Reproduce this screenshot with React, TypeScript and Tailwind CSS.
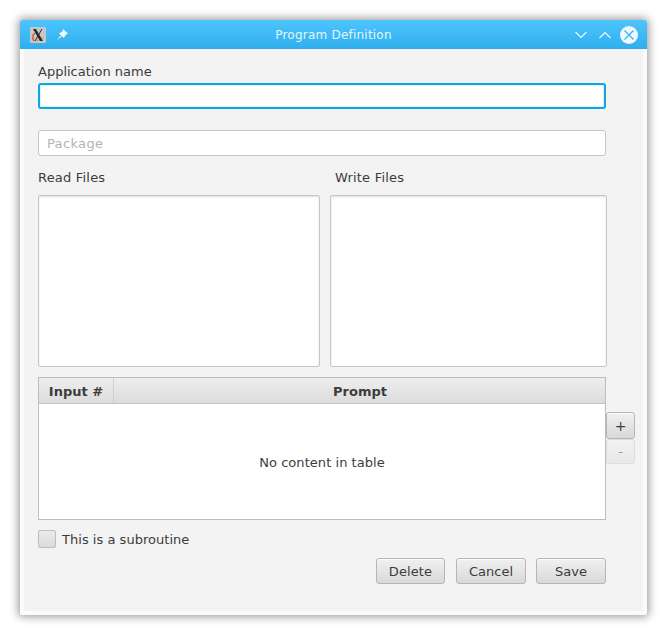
export default function App() {
  const font = { fontFamily: '"DejaVu Sans", sans-serif' };
  const btn =
    "flex items-center justify-center rounded-[3px] border border-[#b5b5b5] bg-gradient-to-b from-[#f0f0f0] to-[#d9d9d9] pt-[1px] text-[13px] text-[#3c3c3c] shadow-[inset_0_1px_0_#fafafa]";
  return (
    <div className="h-[635px] w-[667px] overflow-hidden bg-white pl-[20px] pt-[20px]" style={font}>
      <div className="flex h-[595px] w-[627px] flex-col overflow-hidden rounded-t-[3px] rounded-b-[2px] bg-[#fbfbfb] shadow-[0_0_9px_2px_rgba(0,0,0,0.38)]">
        <div className="flex h-[29px] shrink-0 items-center bg-gradient-to-b from-[#4dc5fe] to-[#2eaeec] pl-[10px] pr-[9px]">
          <svg width="16" height="16" viewBox="0 0 16 16" className="shrink-0">
            <rect width="16" height="16" rx="1" fill="#c4c8cb" />
            <path d="M4 14 Q1 9 5 6" stroke="#d9602a" strokeWidth="1.5" fill="none" />
            <path d="M5 13 Q10 15 14 10" stroke="#dca24a" strokeWidth="1.2" fill="none" />
            <path d="M3 2 L6 2 L13 14 L10 14 Z" fill="#2b2b2b" />
            <path d="M12 2 L5 14" stroke="#2b2b2b" strokeWidth="1" />
          </svg>
          <svg width="14" height="14" viewBox="0 0 14 14" className="ml-[9px] shrink-0">
            <path d="M8 1 L13 5.4 L11 6.4 L8.8 10 L4 5.6 L7.4 3.4 Z" fill="#f4fbff" />
            <path d="M5.8 7.6 L1.5 12.5 L6.6 8.4 Z" fill="#f4fbff" />
          </svg>
          <div className="flex-1 pl-[24px] text-center text-[12px] tracking-[0.22px] text-[#e4f5fe]">Program Definition</div>
          <svg width="14" height="10" viewBox="0 0 14 10" className="shrink-0">
            <path d="M1.5 2 L7 7.5 L12.5 2" stroke="#f2fbff" strokeWidth="1.1" fill="none" />
          </svg>
          <svg width="14" height="10" viewBox="0 0 14 10" className="ml-[10px] shrink-0">
            <path d="M1.5 8 L7 2.5 L12.5 8" stroke="#f2fbff" strokeWidth="1.1" fill="none" />
          </svg>
          <svg width="18" height="18" viewBox="0 0 18 18" className="ml-[8px] shrink-0">
            <circle cx="9" cy="9" r="9" fill="#eef8fd" />
            <path d="M4.5 4.5 L13.5 13.5 M13.5 4.5 L4.5 13.5" stroke="#36b2ee" strokeWidth="1.2" />
          </svg>
        </div>
        <div className="mx-[4px] mb-[4px] flex flex-1 flex-col bg-[#f3f3f3] pl-[14px] text-[13px] text-[#3c3c3c]">
          <div className="mt-[15px] h-[16px] leading-[16px]">Application name</div>
          <div className="mt-[3px] h-[26px] w-[568px] rounded-[3px] border-2 border-[#0fa6de] bg-white shadow-[inset_0_0_0_1px_#dff1f9]" />
          <div className="mt-[21px] flex h-[26px] w-[568px] items-center rounded-[3px] border border-[#c4c4c4] bg-white pl-[8px] pt-[1px] text-[13px] tracking-[0.35px] text-[#b4b4b4]">
            Package
          </div>
          <div className="mt-[14px] flex h-[16px] leading-[16px]">
            <div className="w-[297px] tracking-[0.2px]">Read Files</div>
            <div className="tracking-[0.2px]">Write Files</div>
          </div>
          <div className="mt-[9px] flex h-[172px] w-[569px] gap-[10px]">
            <div className="w-[282px] rounded-[2px] border border-[#c6c6c6] bg-white shadow-[inset_0_1px_2px_#ddd]" />
            <div className="w-[277px] rounded-[2px] border border-[#c6c6c6] bg-white shadow-[inset_0_1px_2px_#ddd]" />
          </div>
          <div className="mt-[10px] flex">
            <div className="flex h-[143px] w-[568px] shrink-0 flex-col border border-[#bdbdbd] bg-white">
              <div className="flex h-[26px] shrink-0 border-b border-[#c4c4c4] bg-gradient-to-b from-[#eeeeee] to-[#dcdcdc] text-[13px] font-bold text-[#3c3c3c]">
                <div className="flex w-[75px] items-center justify-center border-r border-[#cfcfcf] pt-[2px]">Input #</div>
                <div className="flex flex-1 items-center justify-center pl-[1px] pt-[2px]">Prompt</div>
              </div>
              <div className="flex flex-1 items-center justify-center pt-[3px] tracking-[0.05px]">No content in table</div>
            </div>
            <div className="mt-[35px] flex flex-col">
              <div className={"h-[27px] w-[29px] text-[14px] " + btn}>+</div>
              <div className="flex h-[25px] w-[29px] items-center justify-center rounded-[3px] border border-[#dcdcdc] bg-gradient-to-b from-[#f1f1f1] to-[#e8e8e8] pt-[1px] text-[13px] text-[#999]">
                -
              </div>
            </div>
          </div>
          <div className="mt-[10px] flex h-[18px] items-center">
            <div className="h-[18px] w-[18px] rounded-[2px] border border-[#bdbdbd] bg-gradient-to-b from-[#ececec] to-[#dadada]" />
            <span className="ml-[6px] pt-[1px] tracking-[0.03px]">This is a subroutine</span>
          </div>
          <div className="mt-[10px] flex w-[568px] justify-end">
            <div className={"h-[26px] w-[69px] tracking-[0.1px] " + btn}>Delete</div>
            <div className={"ml-[11px] h-[26px] w-[70px] " + btn}>Cancel</div>
            <div className={"ml-[10px] h-[26px] w-[70px] " + btn}>Save</div>
          </div>
        </div>
      </div>
    </div>
  );
}
